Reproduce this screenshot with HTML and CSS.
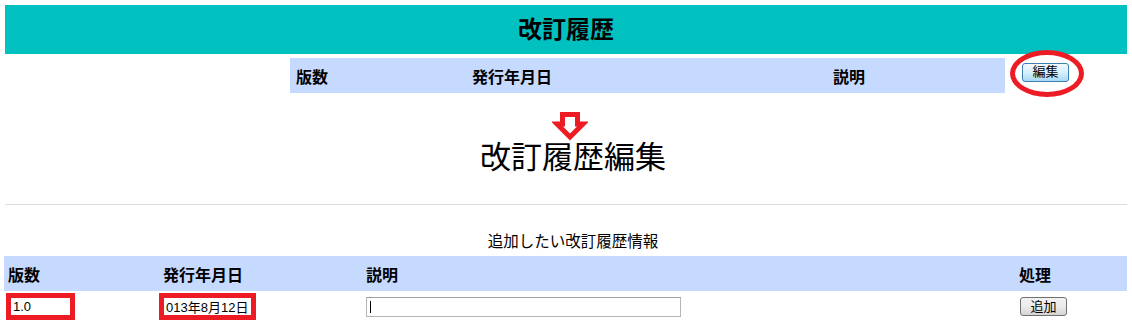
FILE: index.html
```html
<!DOCTYPE html>
<html lang="ja">
<head>
    <meta charset="UTF-8">
    <title>改訂履歴</title>
    <link rel="stylesheet" href="styles.css">
</head>
<body>
    <div class="title-bar">改訂履歴</div>

    <div class="history">
        <div class="history-head">
            <span>版数</span>
            <span>発行年月日</span>
            <span>説明</span>
        </div>
        <div class="history-action">
            <button class="btn-edit">編集</button>
            <span class="ring"></span>
        </div>
    </div>

    <div class="edit-title">
        <svg class="arrow" width="36" height="30" viewBox="0 0 36 30">
            <path d="M10.5 3.5 H25.5 V13 H31 L18 26 L5 13 H10.5 Z" fill="#fff" stroke="#ed1c24" stroke-width="5" stroke-linejoin="miter"/>
        </svg>
        <h2>改訂履歴編集</h2>
    </div>

    <hr class="rule">

    <p class="caption">追加したい改訂履歴情報</p>

    <div class="add-table">
        <div class="add-head">
            <span>版数</span>
            <span>発行年月日</span>
            <span>説明</span>
            <span>処理</span>
        </div>
        <div class="add-row">
            <span class="cell-ver"><input class="marked ver" type="text" value="1.0"></span>
            <span><input class="marked date" type="text" value="013年8月12日"></span>
            <span class="cell-desc"><input class="desc" type="text"></span>
            <span class="cell-btn"><button class="btn-add">追加</button></span>
        </div>
    </div>
</body>
</html>
```

FILE: styles.css
```css
* {
    box-sizing: border-box;
}
body {
    margin: 0;
    padding: 5px 5px 0 5px;
    font-family: "Liberation Sans", "Noto Sans CJK JP", sans-serif;
    color: #000;
    background: #fff;
}
.title-bar {
    height: 49px;
    line-height: 49px;
    background-color: #00c0c0;
    text-align: center;
    font-size: 24px;
    font-weight: bold;
}

/* top history table */
.history {
    display: flex;
    margin-top: 4px;
    padding-left: 285px;
}
.history-head {
    width: 715px;
    height: 35px;
    background-color: #c6d9ff;
    display: grid;
    grid-template-columns: 176px 361px 1fr;
    align-items: center;
    padding-left: 6px;
    font-size: 16px;
    font-weight: bold;
}
.history-action {
    position: relative;
    padding: 4px 0 0 17px;
}
.btn-edit {
    width: 47px;
    height: 19px;
    padding: 0;
    font-family: inherit;
    font-size: 13px;
    line-height: 16px;
    border: 1px solid #3c7fb1;
    border-radius: 3px;
    background: linear-gradient(to bottom, #f2f9fe 0%, #d6f0fd 50%, #a7d9f5 100%);
}
.ring {
    position: absolute;
    left: 5px;
    top: -8px;
    width: 74px;
    height: 47px;
    border: 5px solid #ed1c24;
    border-radius: 50%;
}

/* edit heading */
.edit-title {
    display: flex;
    flex-direction: column;
    align-items: center;
    padding-left: 14px;
    margin-top: 18px;
}
.arrow {
    display: block;
    margin-left: -6px;
}
.edit-title h2 {
    margin: 0;
    font-size: 31px;
    font-weight: normal;
    line-height: 33px;
}
.rule {
    margin: 30px 0 0 0;
    border: none;
    border-top: 1px solid #dddddd;
}
.caption {
    margin: 28px 0 0 0;
    padding-left: 14px;
    text-align: center;
    font-size: 15.5px;
    line-height: 18px;
}

/* add table */
.add-table {
    margin-top: 5px;
    margin-left: -1px;
}
.add-head,
.add-row {
    display: grid;
    grid-template-columns: 155px 203px 653px 1fr;
    align-items: center;
}
.add-head {
    height: 35px;
    background-color: #c6d9ff;
    font-size: 16px;
    font-weight: bold;
}
.add-head span {
    padding-left: 4px;
}
.add-row {
    height: 31px;
}
.cell-ver {
    padding-left: 2px;
}
.cell-desc {
    padding-left: 4px;
}
.cell-btn {
    padding-left: 5px;
}
input {
    font-family: inherit;
    font-size: 13px;
    padding: 0 2px;
    outline: none;
}
.marked {
    height: 27px;
    border: 5px solid #ed1c24;
    background: #fff;
}
.ver {
    width: 69px;
}
.date {
    width: 97px;
}
.desc {
    width: 315px;
    height: 20px;
    border: 1px solid #b5b5b5;
    border-top-color: #a0a0a0;
    background: #fff linear-gradient(#000, #000) no-repeat 3px 3px / 1px 12px;
}
.btn-add {
    width: 47px;
    height: 19px;
    padding: 0;
    font-family: inherit;
    font-size: 13px;
    line-height: 16px;
    border: 1px solid #707070;
    border-radius: 3px;
    background: linear-gradient(to bottom, #f2f2f2 0%, #ebebeb 50%, #d4d4d4 100%);
}
```
